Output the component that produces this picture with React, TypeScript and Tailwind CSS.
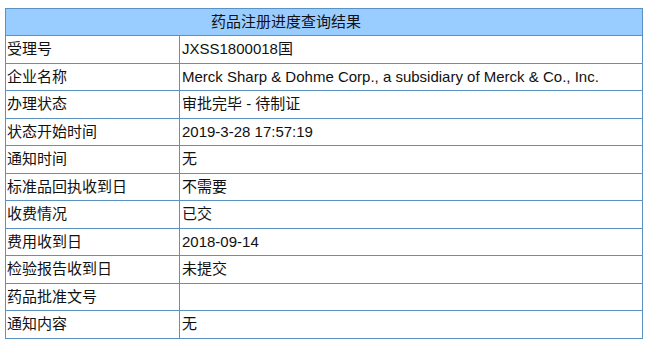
const rows: [string, string][] = [
  ['受理号', 'JXSS1800018国'],
  ['企业名称', 'Merck Sharp & Dohme Corp., a subsidiary of Merck & Co., Inc.'],
  ['办理状态', '审批完毕 - 待制证'],
  ['状态开始时间', '2019-3-28 17:57:19'],
  ['通知时间', '无'],
  ['标准品回执收到日', '不需要'],
  ['收费情况', '已交'],
  ['费用收到日', '2018-09-14'],
  ['检验报告收到日', '未提交'],
  ['药品批准文号', ''],
  ['通知内容', '无'],
]

export default function App() {
  return (
    <div className="h-[341px] w-[648px] overflow-hidden bg-white pl-[5px] pt-[8px] font-['Liberation_Sans','Noto_Sans_CJK_SC',sans-serif] text-[15px] leading-[18px] text-[#111]">
      <table className="w-[638px] border-collapse">
        <thead>
          <tr className="h-[27px] bg-[#99ccff]">
            <th colSpan={2} className="border border-[#5a92c4] p-0 pr-[76px] text-center font-normal">
              药品注册进度查询结果
            </th>
          </tr>
        </thead>
        <tbody>
          {rows.map(([k, v]) => (
            <tr key={k} className="h-[27.5px]">
              <td className="w-[174px] border border-[#5a92c4] p-0 pl-[1px]">{k}</td>
              <td className="border border-[#5a92c4] p-0 pl-[2px]">{v}</td>
            </tr>
          ))}
        </tbody>
      </table>
    </div>
  )
}
